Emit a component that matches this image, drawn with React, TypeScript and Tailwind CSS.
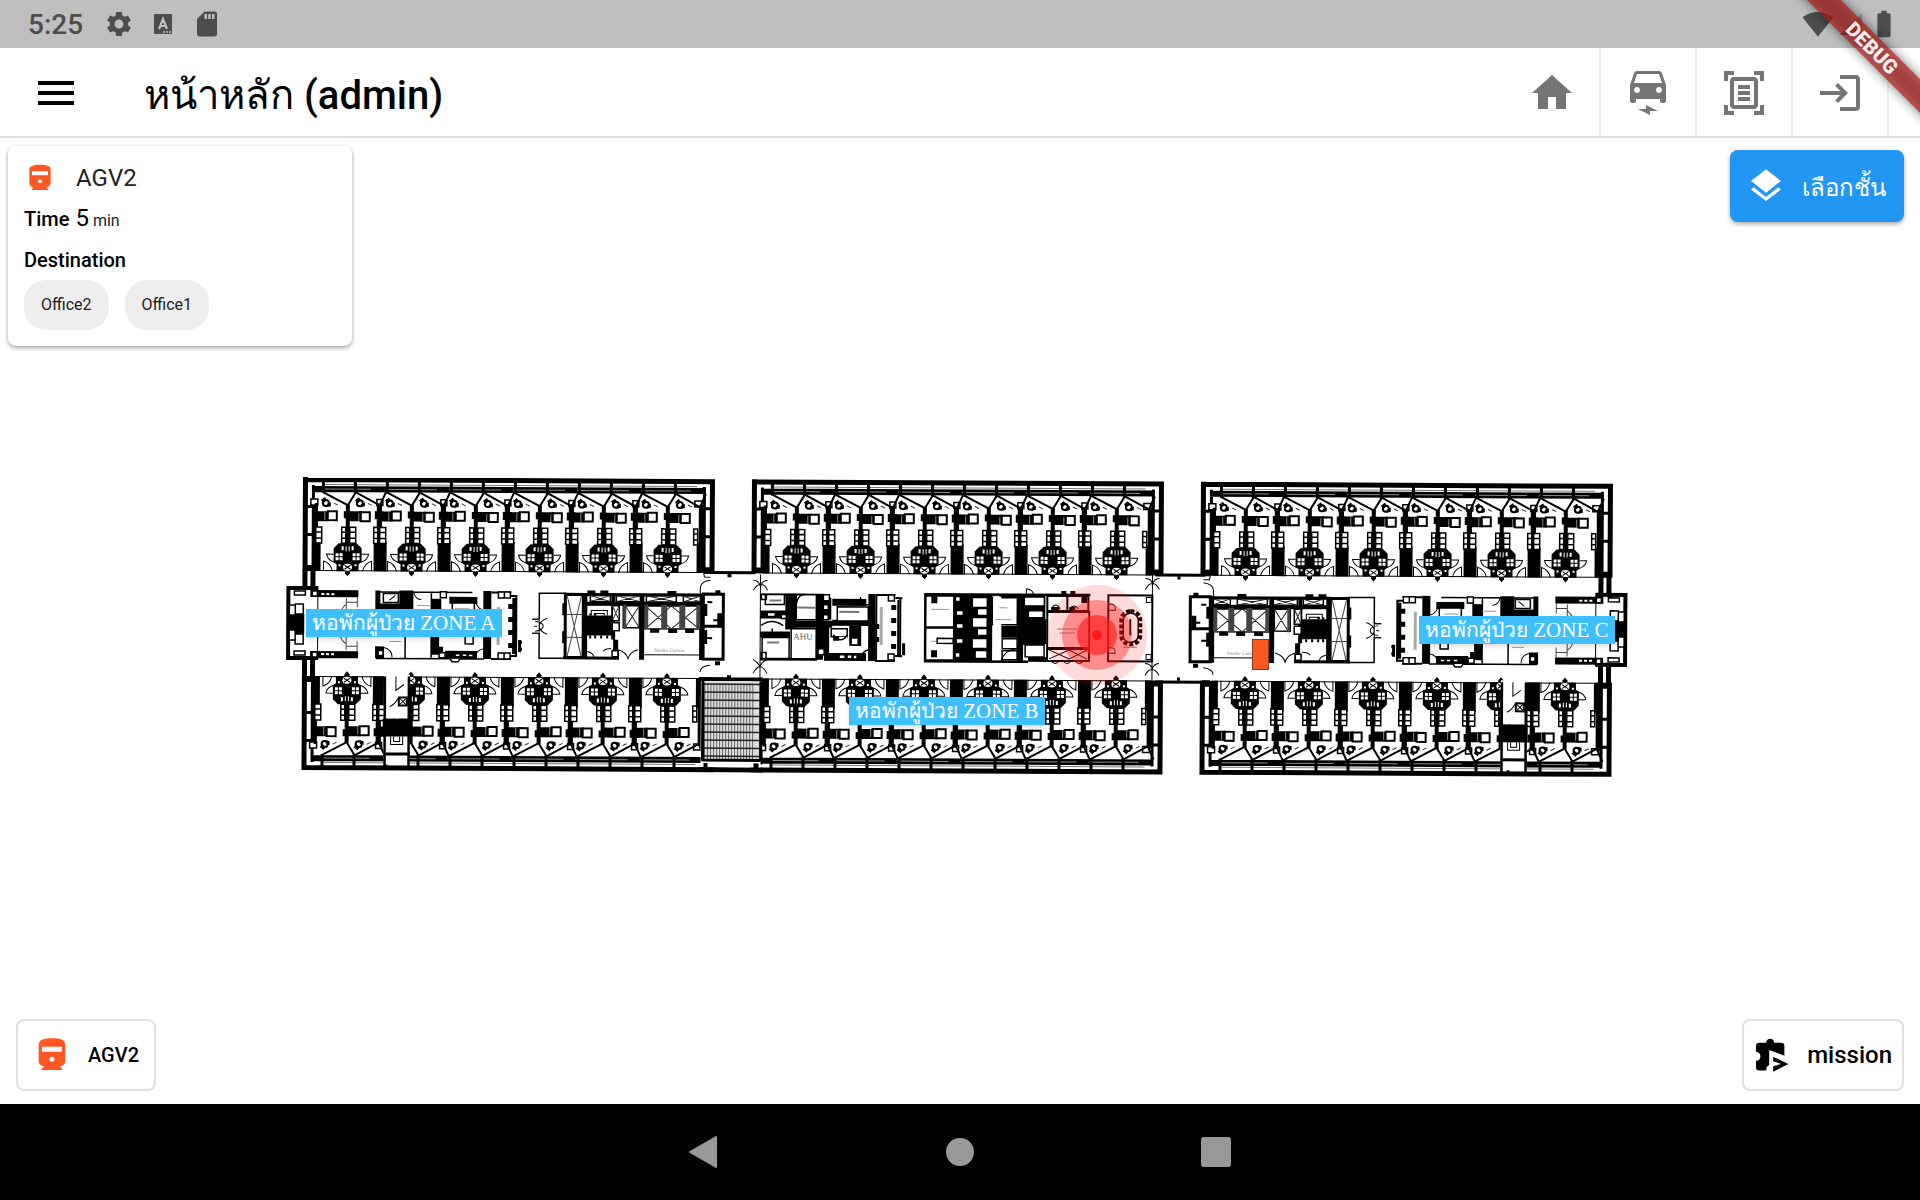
import type { ReactNode } from "react";
import {
  MdBatteryFull,
  MdDirectionsRailwayFilled,
  MdElectricCar,
  MdHome,
  MdLayers,
  MdLogin,
  MdMenu,
  MdOutlineDocumentScanner,
  MdSdCard,
  MdSettings,
  MdSignalWifi4Bar,
} from "react-icons/md";

type Box = [number, number, number, number];

const boxes = (list: Box[]) =>
  list.map(([x, y, w, h]) => `M${x} ${y}h${w}v${h}h${-w}z`).join("");

const Solid = ({ list, fill = "#000" }: { list: Box[]; fill?: string }) => (
  <path d={boxes(list)} fill={fill} />
);
const Outline = ({ list, width = 1 }: { list: Box[]; width?: number }) => (
  <path d={boxes(list)} fill="#fff" stroke="#000" strokeWidth={width} />
);
const Lines = ({ d, width = 1, color = "#000" }: { d: string; width?: number; color?: string }) => (
  <path d={d} fill="none" stroke={color} strokeWidth={width} />
);

/* Two patient rooms that share a bathroom block, centred on x = 0. */
function RoomPair({ last, skipRight }: { last?: boolean; skipRight?: boolean }) {
  return (
    <g>
      <Solid
        list={[
          [-2, 27, 4, 40],
          [-26, 3, 3, 13],
          [6, 3, 3, 13],
          [-33, 26, 3, 40],
          [-4, 34, 7, 7],
          [-31, 34, 12, 10],
          [2, 34, 12, 10],
        ]}
      />
      {!last && (
        <Solid
          list={[
            [29, 26, 5, 40],
            [26, 64, 13, 30],
            [27, 34, 9, 8],
          ]}
        />
      )}
      <Lines d="M-25 15L0 28L8 15M8 15L32 28L38 15" width={2} />
      <Outline
        width={2}
        list={[
          [-20, 34, 9, 9],
          [13, 35, 9, 9],
        ]}
      />
      <Lines d="M-23 35v8M11 36v8" color="#888" />
      <Outline
        width={1.5}
        list={[
          [-32, 50, 6, 5],
          [-32, 55, 6, 6],
          [-32, 61, 6, 5],
          [-6, 50, 4, 5],
          [-6, 55, 4, 6],
          [-6, 61, 4, 5],
          [2, 50, 6, 5],
          [2, 55, 6, 6],
          [2, 61, 6, 5],
          [26, 50, 4, 5],
          [26, 55, 4, 6],
          [26, 61, 4, 5],
        ]}
      />
      {[-22, 12].map((x) => (
        <g key={x}>
          <circle cx={x} cy={26} r={3} fill="#fff" stroke="#000" strokeWidth={2} />
          <path d={`M${x - 5} 23l4 -3l2 3l-3 3zM${x + 1} 27l4 -2v4l-4 1z`} />
          <path d={`M${x + 8} 26l4 2`} stroke="#333" />
        </g>
      ))}
      <path d="M-9 66h18l5 5v14l-3 2v7h-22v-7l-3 -2v-14z" />
      <Solid
        fill="#fff"
        list={[
          [-12, 76, 3, 3],
          [-8, 76, 3, 3],
          [-12, 80, 3, 3],
          [-8, 80, 3, 3],
          [5, 76, 3, 3],
          [9, 76, 3, 3],
          [5, 80, 3, 3],
          [9, 80, 3, 3],
          [-6, 69, 2, 4],
          [-2, 69, 1, 5],
          [1, 69, 1, 5],
          [4, 69, 2, 4],
          [-9, 87, 2, 2],
          [7, 87, 2, 2],
        ]}
      />
      <ellipse cx={0} cy={90} rx={4.5} ry={3.5} fill="#fff" />
      <Lines d="M-3 88l6 4M3 88l-6 4" />
      <path d="M-2.500 94h5v2l-2.500 3l-2.500 -3z" />
      <Lines d="M-14 77h-7q1 6 8 8M14 77h7q-1 6 -8 8M-24 94v-10q7 2 9 10" />
      {!skipRight && <Lines d="M24 94v-10q-7 2 -9 10" />}
    </g>
  );
}

function Wing({ x, y, flip, stairsAfter }: { x: number; y: number; flip?: boolean; stairsAfter?: number }) {
  return (
    <g transform={`translate(${x} ${y}) scale(1 ${flip ? -1 : 1})`}>
      <Solid
        list={[
          [0, 0, 412, 5],
          [0, 0, 5, 94],
          [407, 0, 5, 94],
          [9, 8, 3, 86],
          [400, 8, 3, 86],
          [9, 9, 394, 6],
          [12, 64, 6, 30],
          [12, 26, 3, 40],
          [394, 64, 6, 30],
          [396, 26, 4, 40],
          [4, 28, 6, 3],
          [4, 56, 6, 3],
          [4, 88, 6, 6],
          [402, 28, 6, 3],
          [402, 56, 6, 3],
          [402, 88, 6, 6],
        ]}
      />
      <Lines d="M22 7.500h372" color="#777" />
      <Lines d="M20 12h48M84 12h50M146 12h52M210 12h52M274 12h52M338 12h50" color="#8a8a8a" />
      <Lines d="M12 93.500h388" />
      <Outline
        width={1.5}
        list={[
          [8, 22, 7, 6],
          [74, 22, 6, 6],
          [138, 22, 6, 6],
          [202, 22, 6, 6],
          [266, 22, 6, 6],
          [330, 22, 6, 6],
          [392, 22, 7, 6],
        ]}
      />
      {[0, 1, 2, 3, 4, 5].map((i) => (
        <g key={i} transform={`translate(${45 + i * 64} 0)`}>
          <RoomPair last={i === 5} skipRight={i === 5} />
        </g>
      ))}
      {stairsAfter !== undefined && (
        <g transform={`translate(${stairsAfter} 0)`}>
          <Solid list={[[-2, 6, 26, 90]]} fill="#fff" />
          <Lines d="M-1 4v90M23 4v90" width={2.5} />
          <Solid
            list={[
              [-3, 34, 28, 18],
              [0, 15, 24, 3],
              [12, 64, 10, 10],
            ]}
          />
          <Solid
            fill="#fff"
            list={[
              [3, 52, 2, 2],
              [10, 52, 2, 2],
              [14, 66, 6, 6],
            ]}
          />
          <Lines d="M5 34v-8h12v8M8 34v-5h6v5" />
          <Lines d="M14 66l6 6M20 66l-6 6M4 64q5 2 8 8M10 94v-14l8 6" />
        </g>
      )}
    </g>
  );
}

/* Entrance lobby, wards and the nurse station at the outer end of the corridor. */
function OuterCore() {
  return (
    <g>
      <Outline width={4} list={[[289, 588, 28, 70]]} />
      <Solid
        list={[
          [303, 570, 5, 20],
          [303, 656, 5, 24],
          [311, 568, 5, 22],
          [311, 656, 5, 24],
          [311, 590, 48, 7],
          [311, 651, 48, 7],
          [290, 614, 15, 20],
        ]}
      />
      <Solid list={[[314, 597, 4, 54], [309, 600, 8, 48]]} fill="#fff" />
      <Outline
        width={1.5}
        list={[
          [295, 591, 11, 4],
          [295, 651, 11, 4],
          [296, 604, 8, 10],
          [296, 634, 8, 10],
          [290, 605, 6, 10],
          [290, 630, 6, 10],
          [313, 591, 5, 5],
          [313, 652, 5, 5],
        ]}
      />
      <Solid
        fill="#fff"
        list={[
          [322, 593, 3, 2],
          [327, 593, 3, 2],
          [332, 593, 3, 2],
          [322, 653, 3, 2],
          [327, 653, 3, 2],
          [332, 653, 3, 2],
        ]}
      />
      <Lines d="M358 597v10M358 641v10M347 598v52M347 602h11M347 646h11M347 604q-8 6 -8 20q0 14 8 20" color="#444" />
      <Lines d="M377 591.500h96M377 658h74l2 3h6l2 -3h24M406 600v58M432 591v66" width={1.5} />
      <Solid
        list={[
          [376, 590, 5, 26],
          [381, 603, 20, 8],
          [400, 590, 14, 26],
          [432, 598, 10, 14],
          [376, 646, 9, 12],
          [432, 636, 8, 18],
          [450, 596, 28, 7],
          [484, 590, 8, 68],
          [446, 650, 32, 8],
          [436, 646, 8, 8],
        ]}
      />
      <Outline
        width={1.5}
        list={[
          [384, 593, 15, 9],
          [441, 591, 6, 6],
          [379, 650, 5, 5],
          [440, 652, 6, 5],
          [453, 602, 22, 14],
          [466, 632, 8, 11],
          [456, 653, 5, 3],
          [463, 653, 5, 3],
          [469, 653, 5, 3],
        ]}
      />
      <Lines d="M414 591q2 8 8 8M476 600q2 8 8 9M385 647q8 2 8 10M476 657q1 -8 8 -9M390 600l6 -5" />
      <Lines d="M418 605h14M390 641h12M456 608h14" color="#999" />
      <Lines d="M492 591.500h20M492 658h20M517 595v60M511 595h7M511 655h7" width={2} />
      <Outline
        width={1.5}
        list={[
          [499, 591, 6, 6],
          [505, 591, 6, 6],
          [499, 652, 6, 6],
          [505, 652, 6, 6],
        ]}
      />
      <Solid
        list={[
          [509, 603, 6, 5],
          [509, 616, 6, 5],
          [509, 629, 6, 5],
          [509, 642, 6, 5],
          [513, 597, 4, 56],
          [519, 639, 3, 12],
        ]}
      />
      <circle cx={521} cy={641} r={2} />
      <circle cx={521} cy={648} r={2} />
      <Lines d="M499 606v38" color="#aaa" width={3} />
    </g>
  );
}

/* Lifts, stairs and service rooms in the middle of the corridor. */
function LiftCore() {
  return (
    <g>
      <Lines d="M533 618h6M533 632h6M539 617v16M539 618q9 3 9 7q0 4 -9 7M548 617q-8 4 -8 8q0 4 8 8M535 625h10" />
      <Outline width={1.5} list={[[540, 592, 26, 65]]} />
      <Solid list={[[538, 618, 4, 14]]} fill="#fff" />
      <Lines d="M533 618h7v14h-7M548 617q-8 3 -8 8q0 5 8 8M536 620q8 1 8 5q0 4 -8 5" />
      <Outline width={3} list={[[566, 593, 18, 63], [586, 593, 118, 9]]} />
      <Lines d="M568 595l14 60M582 595l-14 60M567 613h17M567 636h17" color="#444" />
      <Solid
        list={[
          [563, 602, 4, 12],
          [563, 630, 4, 12],
          [584, 592, 4, 66],
          [588, 614, 25, 20],
          [587, 600, 117, 4],
          [612, 592, 4, 46],
          [640, 592, 5, 66],
          [700, 592, 4, 66],
          [564, 655, 56, 3],
          [588, 589, 8, 4],
          [601, 589, 8, 4],
          [668, 589, 9, 4],
          [651, 626, 9, 5],
          [669, 626, 9, 5],
          [686, 626, 9, 5],
          [614, 638, 5, 16],
        ]}
      />
      <Lines d="M591 634v3M596 634v3M602 634v3M608 634v3M591 614v-2M596 614v-2" width={2} />
      <Outline
        width={1.500}
        list={[
          [591, 594, 20, 6],
          [617, 594, 24, 6],
          [647, 594, 30, 6],
          [684, 594, 17, 6],
          [613, 604, 7, 15],
          [613, 621, 7, 8],
          [624, 604, 16, 22],
          [645, 604, 56, 23],
          [613, 649, 6, 6],
        ]}
      />
      <Lines
        d="M591 594l20 6M611 594l-20 6M617 594l24 6M641 594l-24 6M647 594l30 6M677 594l-30 6M684 594l17 6M701 594l-17 6M613 604l7 15M620 604l-7 15M626 604l14 22M640 604l-14 22M646 604l26 23M646 627l26 -23M672 604l28 23M672 627l28 -23"
        color="#222"
      />
      <Solid list={[[662, 603, 6, 24], [680, 603, 6, 24], [624, 603, 3, 24], [697, 603, 4, 24], [645, 603, 4, 24]]} fill="#444" />
      <Lines d="M592 614v-5h16v5M595 614v-2h10v2M592 609h16" />
      <Lines d="M619 656v-8q8 2 10 9q2 -7 10 -9M588 650q6 1 7 6M604 650q2 -3 8 -3M645 653h56" />
      <Lines d="M704 570l1 5h6M704 597q-4 -1 -3 -12q1 -6 10 -7M704 571h8M704 676h8M711 663q-10 1 -10 7" />
      <Outline width={3} list={[[704, 592, 20, 32], [704, 624, 20, 33]]} />
      <Solid
        list={[
          [704, 602, 4, 12],
          [704, 628, 4, 14],
          [718, 611, 5, 14],
          [716, 588, 5, 4],
          [716, 659, 5, 4],
        ]}
      />
      <Lines d="M708 600h5M708 636h5M714 618h6" width={2} />
    </g>
  );
}

function CentreCore() {
  return (
    <g>
      <Lines
        d="M761 572v104M754 578q5 0 7 6q2 -6 7 -6M754 588q3 -6 7 -6q5 0 7 6M754 657q4 2 7 7q2 -5 7 -7M754 671q3 -6 7 -7q4 1 7 7"
      />
      <g transform="translate(0 -2)">
        <Solid
          list={[
            [761, 593, 57, 3],
            [761, 610, 26, 8],
            [786, 593, 11, 36],
            [797, 620, 36, 7],
            [817, 593, 7, 66],
            [824, 597, 8, 22],
            [833, 598, 34, 7],
            [833, 619, 36, 6],
            [869, 593, 7, 67],
            [761, 631, 30, 6],
            [824, 626, 6, 28],
            [825, 652, 42, 8],
            [761, 657, 57, 3],
            [850, 625, 12, 20],
            [834, 630, 6, 12],
          ]}
        />
        <Outline
          width={1.5}
          list={[
            [766, 594, 19, 10],
            [797, 594, 20, 25],
            [838, 606, 31, 14],
            [792, 628, 25, 30],
            [763, 637, 27, 21],
            [768, 612, 8, 4],
            [762, 594, 5, 5],
            [762, 652, 5, 6],
            [824, 594, 6, 6],
            [824, 604, 5, 5],
            [824, 614, 5, 5],
            [819, 648, 6, 6],
            [832, 628, 16, 8],
            [852, 637, 7, 7],
            [840, 654, 6, 4],
            [848, 654, 5, 4],
            [854, 654, 4, 4],
            [782, 614, 5, 4],
          ]}
        />
        <Solid list={[[834, 640, 16, 11], [840, 636, 8, 6]]} fill="#fff" />
        <Lines d="M834 634q8 10 14 0M797 603q2 -9 8 -9M861 596q0 8 8 8M762 625q10 -8 22 0M862 658q1 -8 7 -9M773 636v-8" width={1.5} />
        <Lines d="M770 600h12M798 607h18M768 642h12M840 611h20" color="#777" width={2} />
        <Lines d="M882 606v38" color="#aaa" width={3} />
        <Lines d="M876 594h20M876 660h20M901 597v58M896 597h7M896 655h7M877 594v66" width={2} />
        <Outline width={1.5} list={[[889, 594, 6, 6], [889, 653, 6, 6]]} />
        <Solid
          list={[
            [892, 604, 5, 5],
            [892, 617, 5, 5],
            [892, 630, 5, 5],
            [892, 643, 5, 5],
            [898, 599, 2, 56],
            [874, 623, 6, 5],
            [874, 636, 6, 5],
            [903, 642, 3, 12],
          ]}
        />
      </g>
      <text x={794} y={637} fontSize={9} fill="#555" className="font-['Liberation_Serif']">
        AHU
      </text>

      <g transform="translate(0 -3)">
        <Lines d="M925 594h166M925 661h104" width={2.500} />
        <Outline width={2.5} list={[[926, 595, 29, 32], [926, 627, 29, 33]]} />
        <Solid
          list={[
            [955, 594, 14, 67],
            [969, 594, 24, 67],
            [932, 596, 6, 7],
            [932, 650, 6, 7],
            [1018, 594, 6, 67],
            [1024, 594, 22, 50],
            [1000, 594, 20, 5],
            [1002, 625, 18, 12],
            [1029, 656, 18, 5],
          ]}
        />
        <Outline
          width={1.5}
          list={[
            [938, 638, 16, 5],
            [956, 596, 5, 5],
            [957, 610, 7, 5],
            [957, 623, 7, 5],
            [957, 638, 7, 5],
            [956, 652, 5, 5],
            [973, 597, 15, 10],
            [973, 617, 15, 10],
            [973, 638, 15, 10],
            [978, 608, 10, 7],
            [978, 628, 10, 7],
            [976, 650, 12, 8],
            [993, 597, 25, 27],
            [1003, 638, 15, 10],
            [1003, 650, 15, 9],
            [1025, 596, 20, 9],
            [1029, 610, 15, 7],
            [1026, 644, 19, 12],
          ]}
        />
        <Solid list={[[994, 596, 8, 62]]} fill="#fff" />
        <Solid list={[[1021, 618, 26, 25]]} />
        <Lines d="M1027 588v7M1027 588q7 1 7 6M984 648q8 2 8 10M1002 661q3 -12 16 -13" />
        <Lines d="M932 609h18M932 641h5M996 619h16M1000 607h8" color="#999" />
        <Outline width={2} list={[[1048, 595, 20, 15], [1068, 595, 21, 15], [1048, 611, 42, 36], [1048, 648, 42, 12]]} />
        <Lines d="M1050 649l20 9M1070 649l-20 9M1070 649l18 9M1088 649l-18 9M1052 660q4 5 8 0M1064 660q4 5 8 0M1076 660q4 5 8 0M1052 608q4 -8 9 0M1070 608q5 -6 9 0" />
        <Solid list={[[1052, 606, 8, 4], [1070, 606, 6, 4], [1082, 596, 6, 6], [1062, 590, 5, 4], [1071, 590, 5, 4]]} />
        <Outline width={2} list={[[1109, 594, 44, 66]]} />
        <Lines d="M1109 603q8 -1 7 6l-7 0M1109 646q8 0 7 6l-7 0" />
        <Outline list={[[1147, 596, 5, 5], [1147, 653, 5, 5]]} />
        <rect x={1124} y={612} width={15} height={29} rx={7} fill="#fff" stroke="#000" strokeWidth={1.5} />
        <rect x={1122} y={610} width={19} height={33} rx={9} fill="none" stroke="#000" strokeWidth={4} strokeDasharray="4 2" />
        <Lines d="M1131 618v16" width={2} />
        <Lines d="M1124 646h14M1058 628h20M1060 632h16" color="#888" />
      </g>
      <Lines d="M1153 570v24M1153 656v24M1146 574q7 0 7 7q1 -7 7 -7M1146 585q3 -6 7 -6q4 0 7 6M1146 659q7 0 7 7q1 -7 7 -7M1146 671q3 -6 7 -6q4 0 7 6" />
    </g>
  );
}

function FloorPlan() {
  const slabLines = Array.from({ length: 17 }, (_, i) => `M${706 + i * 3} 681v76`).join("");
  const slabRows = Array.from({ length: 10 }, (_, i) => `M703 ${682 + i * 8}h58`).join("");
  return (
    <svg viewBox="270 441 1380 360" className="block w-full" role="img" aria-label="Floor plan">
      <g transform="rotate(0.3 304 477)">
        <Wing x={303} y={477} />
        <Wing x={752} y={477} />
        <Wing x={1201} y={477} />
        <Wing x={303} y={770} flip stairsAfter={84} />
        <Wing x={752} y={770} flip />
        <Wing x={1201} y={770} flip stairsAfter={303} />
        <Solid
          list={[
            [706, 569, 50, 3],
            [1156, 569, 50, 3],
            [1156, 676, 50, 3],
            [700, 675, 64, 4],
            [700, 765, 64, 5],
            [728, 572, 4, 3],
            [728, 673, 4, 3],
            [1178, 572, 3, 3],
            [1178, 673, 3, 3],
          ]}
        />
        <Solid list={[[702, 679, 60, 86]]} fill="#fff" />
        <Solid list={[[704, 679, 58, 79]]} fill="#ddd" />
        <Lines d={slabLines} color="#666" />
        <Lines d={slabRows} width={1.5} color="#222" />
        <Lines d="M704 679v80M762 679v80M704 758h58" width={3} />
        <Solid list={[[705, 761, 4, 6], [755, 761, 5, 6]]} />
        <OuterCore />
        <LiftCore />
        <g transform="translate(1915 0) scale(-1 1)">
          <OuterCore />
          <LiftCore />
        </g>
        <CentreCore />
        <g className="font-['Liberation_Serif']" fontSize={5} fill="#777">
          <text x={655} y={650}>Smoke Curtain</text>
          <text x={1228} y={650}>Smoke Curtain</text>
        </g>
      </g>
    </svg>
  );
}

function ZoneLabel({ className, children }: { className: string; children: ReactNode }) {
  return (
    <span
      className={`absolute whitespace-nowrap bg-[#40bfff] px-1.5 font-['Liberation_Serif',serif] text-[21px] leading-7 text-white shadow-md ${className}`}
    >
      {children}
    </span>
  );
}

function AppBarAction({ label, children }: { label: string; children: ReactNode }) {
  return (
    <button
      type="button"
      aria-label={label}
      className="flex w-24 items-center justify-center border-r-2 border-[#eeeeee] pt-0.5 text-5xl text-[#757575]"
    >
      {children}
    </button>
  );
}

function PuzzlePlayIcon() {
  return (
    <svg viewBox="0 0 100 102" className="h-[34px] w-[33px]" aria-hidden="true">
      <path d="M10 14H31C31 -2 55 -2 55 14H76Q86 14 86 24V53L40 36V82Q31 84 31 98H10Q0 98 0 88V69C18 69 18 41 0 41V24Q0 14 10 14Z" />
      <path d="M52 56L98 78L52 102V85L76 78L52 70Z" />
    </svg>
  );
}

export default function App() {
  return (
    <div className="relative flex min-h-screen flex-col bg-white font-[Roboto,sans-serif] text-black">
      <div className="flex h-12 items-center justify-between bg-[#bfbfbf] pr-5 pl-7 text-[#4d4d4d]">
        <div className="flex items-center">
          <span className="pt-0.5 text-[28px] leading-8 font-medium">5:25</span>
          <MdSettings className="ml-[21px] size-[30px]" />
          <svg viewBox="0 0 18 20" className="ml-5 h-5 w-[18px]" aria-hidden="true">
            <rect width="18" height="20" rx="1" fill="currentColor" />
            <path d="M5 15L9 5L13 15M6.500 12h5" fill="none" stroke="#bfbfbf" strokeWidth="2.200" />
            <path d="M9 18h2M12 18h2M15 18h2" stroke="#bfbfbf" strokeWidth="1.500" />
          </svg>
          <MdSdCard className="ml-5 size-[30px]" />
        </div>
        <div className="flex items-center gap-1.5">
          <MdSignalWifi4Bar className="size-8" />
          <svg viewBox="0 0 22 22" className="size-[22px]" aria-hidden="true">
            <path d="M22 0V22H0z" fill="currentColor" opacity="0.400" />
            <path d="M12 10V22H0z" fill="currentColor" />
          </svg>
          <MdBatteryFull className="size-8" />
        </div>
      </div>

      <header className="flex h-[90px] items-stretch border-b-2 border-[#e0e0e0]">
        <button type="button" aria-label="Open menu" className="flex w-28 items-center justify-center pt-0.5 text-5xl">
          <MdMenu />
        </button>
        <h1 className="flex flex-1 items-center gap-2.5 pt-2 pl-8 text-[40px] font-medium">
          <span className="font-normal">หน้าหลัก</span>
          <span>(admin)</span>
        </h1>
        <nav className="flex pr-[31px]" aria-label="Main">
          <AppBarAction label="Home">
            <MdHome />
          </AppBarAction>
          <AppBarAction label="Vehicles">
            <MdElectricCar />
          </AppBarAction>
          <AppBarAction label="Scan document">
            <MdOutlineDocumentScanner />
          </AppBarAction>
          <AppBarAction label="Log in">
            <MdLogin />
          </AppBarAction>
        </nav>
      </header>

      <main className="grid flex-1 grid-cols-1 grid-rows-1">
        <div className="relative col-start-1 row-start-1 w-[1380px] self-center justify-self-center">
          <FloorPlan />
          <ZoneLabel className="top-[168px] left-9">หอพักผู้ป่วย ZONE A</ZoneLabel>
          <ZoneLabel className="top-64 left-[579px]">หอพักผู้ป่วย ZONE B</ZoneLabel>
          <ZoneLabel className="top-[175px] left-[1149px]">หอพักผู้ป่วย ZONE C</ZoneLabel>
          <svg viewBox="0 0 100 100" className="absolute top-36 left-[777px] size-[100px]" aria-hidden="true">
            <circle cx="50" cy="50" r="50" fill="#ff1a1a" opacity="0.160" />
            <circle cx="50" cy="50" r="35" fill="#ff1a1a" opacity="0.400" />
            <circle cx="50" cy="50" r="20" fill="#ff1a1a" opacity="0.650" />
            <circle cx="50" cy="50" r="5" fill="#ff1a1a" />
          </svg>
          <div className="absolute top-[198px] left-[982px] h-[31px] w-[17px] border border-[#8a3a20] bg-[#ff5722]" />
        </div>

        <section
          aria-label="AGV2 status"
          className="z-10 col-start-1 row-start-1 mt-2 ml-2 w-[344px] self-start justify-self-start rounded-lg bg-white p-4 shadow-[0_2px_4px_rgba(0,0,0,0.35),0_0_2px_rgba(0,0,0,0.08)]"
        >
          <div className="flex items-center gap-5">
            <MdDirectionsRailwayFilled className="size-8 text-[#ff5722]" />
            <h2 className="text-2xl text-[#212121]">AGV2</h2>
          </div>
          <p className="mt-2 flex h-8 items-baseline leading-8">
            <span className="text-xl font-medium">Time</span>
            <span className="ml-1.5 text-2xl leading-8">5</span>
            <span className="ml-1 text-base text-[#212121]">min</span>
          </p>
          <h3 className="mt-2.5 text-xl leading-8 font-medium">Destination</h3>
          <ul className="mt-1 flex gap-4">
            <li className="rounded-[22px] bg-[#eeeeee] px-[17px] py-[13px] text-base text-[#212121]">Office2</li>
            <li className="rounded-[22px] bg-[#eeeeee] px-[17px] py-[13px] text-base text-[#212121]">Office1</li>
          </ul>
        </section>

        <button
          type="button"
          className="z-10 col-start-1 row-start-1 mt-3 mr-4 flex h-[72px] items-center gap-4 self-start justify-self-end rounded-lg bg-[#2196f3] pr-[18px] pl-4 text-2xl text-white shadow-[0_2px_4px_rgba(0,0,0,0.35)]"
        >
          <MdLayers className="size-10" />
          <span className="pt-1">เลือกชั้น</span>
        </button>

        <button
          type="button"
          className="z-10 col-start-1 row-start-1 mb-[13px] ml-4 flex h-[72px] items-center gap-4 self-end justify-self-start rounded-lg border-2 border-[#e0e0e0] bg-white pr-[15px] pl-3.5 text-xl font-medium"
        >
          <MdDirectionsRailwayFilled className="size-10 text-[#ff5722]" />
          AGV2
        </button>

        <button
          type="button"
          className="z-10 col-start-1 row-start-1 mr-4 mb-[13px] flex h-[72px] items-center gap-[18px] self-end justify-self-end rounded-lg border-2 border-[#e0e0e0] bg-white pr-2.5 pl-3 text-2xl font-medium"
        >
          <PuzzlePlayIcon />
          mission
        </button>
      </main>

      <nav className="flex h-24 items-center justify-center gap-40 bg-black" aria-label="System">
        <button type="button" aria-label="Back" className="flex w-24 justify-center">
          <svg viewBox="0 0 32 32" className="size-8">
            <path d="M28 1V31L2 16z" fill="#999" stroke="#999" strokeWidth="2" strokeLinejoin="round" />
          </svg>
        </button>
        <button type="button" aria-label="Home screen" className="flex w-24 justify-center">
          <span className="size-7 rounded-full bg-[#999999]" />
        </button>
        <button type="button" aria-label="Recent apps" className="flex w-24 justify-center">
          <span className="size-[30px] rounded-[3px] bg-[#999999]" />
        </button>
      </nav>

      <div className="pointer-events-none absolute top-0 right-0 z-20 size-40 overflow-hidden">
        <div className="absolute top-9 -right-[52px] h-6 w-[200px] rotate-45">
          <div className="absolute inset-0 bg-black/50 blur-[6px]" />
          <div className="relative bg-[#b71c1c]/65 text-center text-xl leading-6 font-black text-white/90">DEBUG</div>
        </div>
      </div>
    </div>
  );
}
